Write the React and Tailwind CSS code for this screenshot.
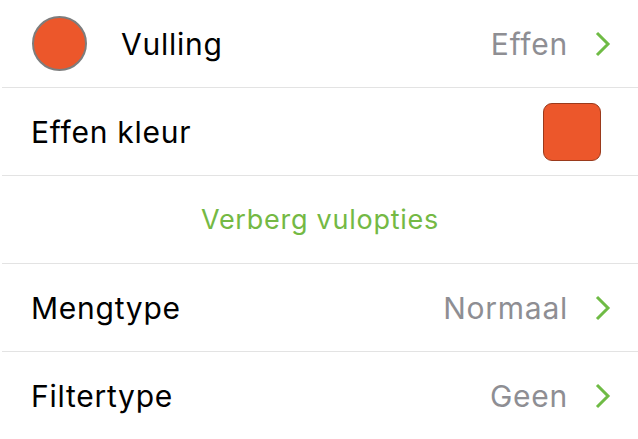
import React from "react";

const Chevron = () => (
  <svg width="17" height="26" viewBox="0 0 17 26" className="ml-[26px] shrink-0" aria-hidden>
    <path d="M3 2 L14 13 L3 24" fill="none" stroke="#6fbb45" strokeWidth="3" strokeLinecap="butt" strokeLinejoin="miter" />
  </svg>
);

function Row({ children, last = false }) {
  return (
    <div className={`h-[88px] flex items-center pl-[29px] pr-[27px] ${last ? "" : "border-b border-[#e3e3e3]"}`}>
      {children}
    </div>
  );
}

function NavRow({ label, value, last }) {
  return (
    <Row last={last}>
      <span className="text-black">{label}</span>
      <span className="ml-auto text-[#8e8e93]">{value}</span>
      <Chevron />
    </Row>
  );
}

export default function App() {
  return (
    <div
      className="w-[638px] h-[439px] bg-white overflow-hidden text-[30px] leading-none tracking-[0.025em]"
      style={{ fontFamily: "Inter, 'Liberation Sans', sans-serif" }}
    >
      <div className="ml-[2px]">
        <Row>
          <div className="ml-[1px] w-[55px] h-[55px] rounded-full bg-[#ec572b] border-2 border-[#7d7d7d] shrink-0" />
          <span className="ml-[34px] text-black">Vulling</span>
          <span className="ml-auto text-[#8e8e93]">Effen</span>
          <Chevron />
        </Row>
        <Row>
          <span className="text-black">Effen kleur</span>
          <div className="ml-auto mr-[10px] w-[58px] h-[58px] rounded-[9px] bg-[#ec572b] border border-[#9a3a1c]" />
        </Row>
        <div className="h-[88px] flex items-center justify-center border-b border-[#e3e3e3] text-[27px] text-[#74b944]">
          Verberg vulopties
        </div>
        <NavRow label="Mengtype" value="Normaal" />
        <NavRow label="Filtertype" value="Geen" last />
      </div>
    </div>
  );
}
